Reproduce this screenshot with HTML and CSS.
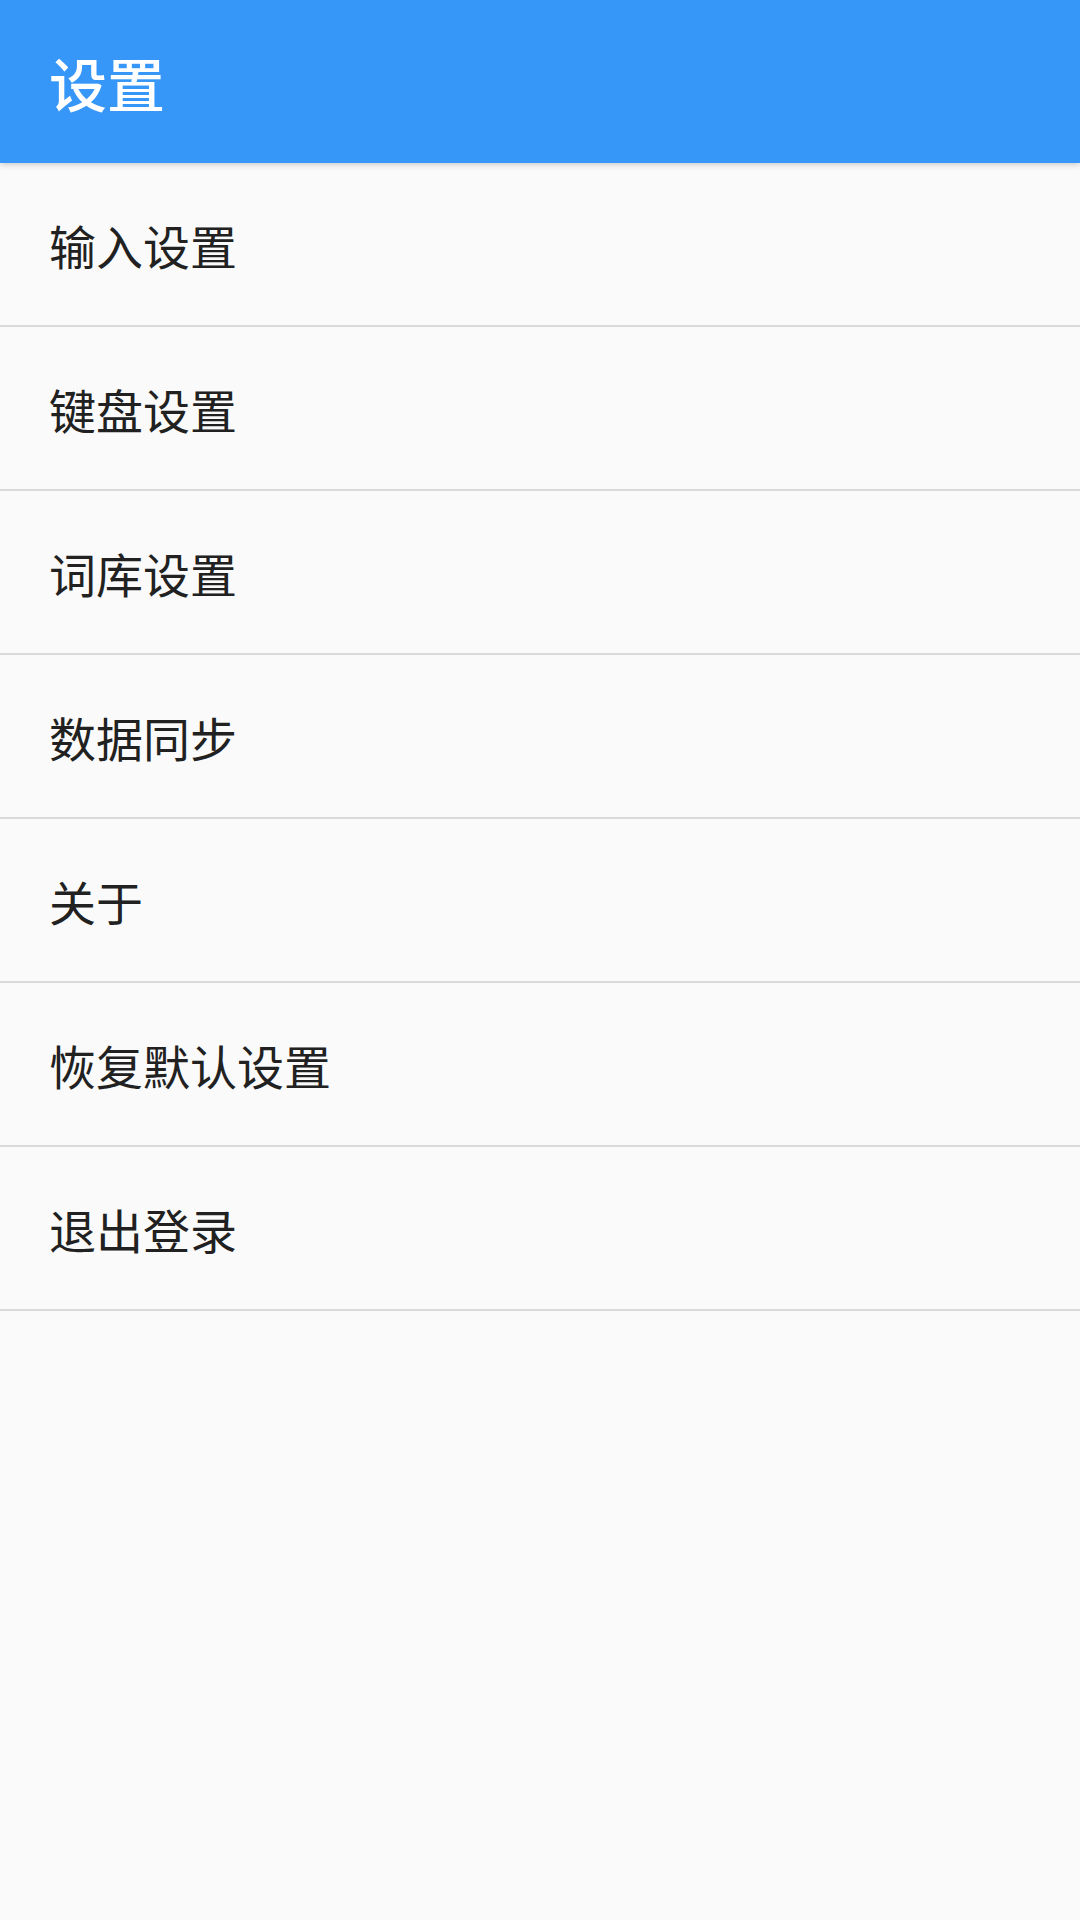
FILE: index.html
```html
<!DOCTYPE html>
<html lang="zh-CN">

<head>
    <meta charset="UTF-8">
    <meta name="viewport" content="width=device-width, initial-scale=1.0">
    <title>设置</title>
    <link rel="stylesheet" href="styles.css">
</head>

<body>
    <div class="toolbar">
        <h1>设置</h1>
    </div>

    <ul class="settings-list">
        <li>输入设置</li>
        <li>键盘设置</li>
        <li>词库设置</li>
        <li>数据同步</li>
        <li>关于</li>
        <li>恢复默认设置</li>
        <li>退出登录</li>
    </ul>
</body>

</html>
```

FILE: styles.css
```css
body {
    font-family: "Noto Sans CJK SC", "Noto Sans", sans-serif;
    margin: 0;
    padding: 0;
    background-color: #fafafa;
    min-height: 1920px;
}
.toolbar {
    height: 163px;
    background-color: #3797f9;
    display: flex;
    align-items: center;
    padding: 0 49px;
    box-shadow: 0 2px 6px rgba(0, 0, 0, 0.18);
    position: relative;
}
.toolbar h1 {
    margin: 0;
    color: #fff;
    font-size: 58px;
    font-weight: 500;
    line-height: 1;
}
.settings-list {
    list-style: none;
    margin: 0;
    padding: 0;
}
.settings-list li {
    display: flex;
    align-items: center;
    padding: 0 49px;
    box-sizing: border-box;
    height: 164px;
    border-bottom: 2px solid #dadada;
    color: #212121;
    font-size: 47px;
    line-height: 1;
}
```
